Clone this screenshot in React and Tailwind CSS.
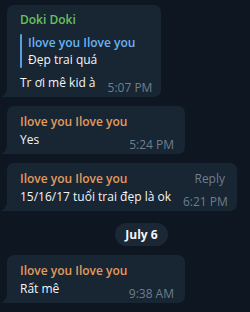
import React from "react";

const messages = [
  {
    name: "Doki Doki",
    nameColor: "text-[#67c25e]",
    width: "w-[154px]",
    reply: { name: "Ilove you Ilove you", text: "Đẹp trai quá" },
    text: "Tr ơi mê kid à",
    time: "5:07 PM",
  },
  {
    name: "Ilove you Ilove you",
    nameColor: "text-[#e39b5d]",
    width: "w-[178px]",
    text: "Yes",
    time: "5:24 PM",
  },
  {
    name: "Ilove you Ilove you",
    nameColor: "text-[#e39b5d]",
    width: "w-[230px]",
    text: "15/16/17 tuổi trai đẹp là ok",
    time: "6:21 PM",
    showReply: true,
  },
];

const last = {
  name: "Ilove you Ilove you",
  nameColor: "text-[#e39b5d]",
  width: "w-[178px]",
  text: "Rất mê",
  time: "9:38 AM",
};

function Bubble({ msg }) {
  return (
    <div
      className={`relative ${msg.width} rounded-[7px] rounded-bl-none bg-[#182533] pl-[13px] pr-[11px] pb-[5px] ${
        msg.reply ? "pt-[6px]" : "pt-[7px]"
      }`}
    >
      <div className="flex items-center justify-between">
        <span className={`font-semibold ${msg.nameColor}`}>{msg.name}</span>
        {msg.showReply && (
          <span className="text-[12px] text-[#6d7f8f] pr-[1px]">Reply</span>
        )}
      </div>
      {msg.reply && (
        <div className="mt-[5px] mb-[6px] flex">
          <div className="w-[2px] rounded-full bg-[#5a9fe0]" />
          <div className="pl-[6px] leading-[17px]">
            <div className="font-semibold text-[#6ab3f3]">{msg.reply.name}</div>
            <div className="text-[#f5f5f5]">{msg.reply.text}</div>
          </div>
        </div>
      )}
      <div className="flex items-end justify-between gap-3">
        <span className="text-[#f5f5f5] whitespace-nowrap">{msg.text}</span>
        <span className="translate-y-[4px] text-[12px] leading-[16px] text-[#6d7f8f] whitespace-nowrap">
          {msg.time}
        </span>
      </div>
      <svg
        className="absolute bottom-0 left-[-6px]"
        width="6"
        height="8"
        viewBox="0 0 6 8"
      >
        <path d="M6 0 L6 8 L0 8 C2.5 7 5 4.5 6 0 Z" fill="#182533" />
      </svg>
    </div>
  );
}

export default function App() {
  return (
    <div className="min-h-screen bg-[#0e1621] font-['Open_Sans',sans-serif] text-[12px] leading-[18px] pt-[5px] pl-[7px]">
      <div className="flex flex-col gap-[9px]">
        {messages.map((m, i) => (
          <Bubble key={i} msg={m} />
        ))}
      </div>
      <div className="mt-[12px] mb-[9px] ml-[108px] flex h-[23px] w-[53px] items-center justify-center rounded-full bg-[#1b2734] font-bold text-[#f5f5f5]">
        July 6
      </div>
      <Bubble msg={last} />
    </div>
  );
}
